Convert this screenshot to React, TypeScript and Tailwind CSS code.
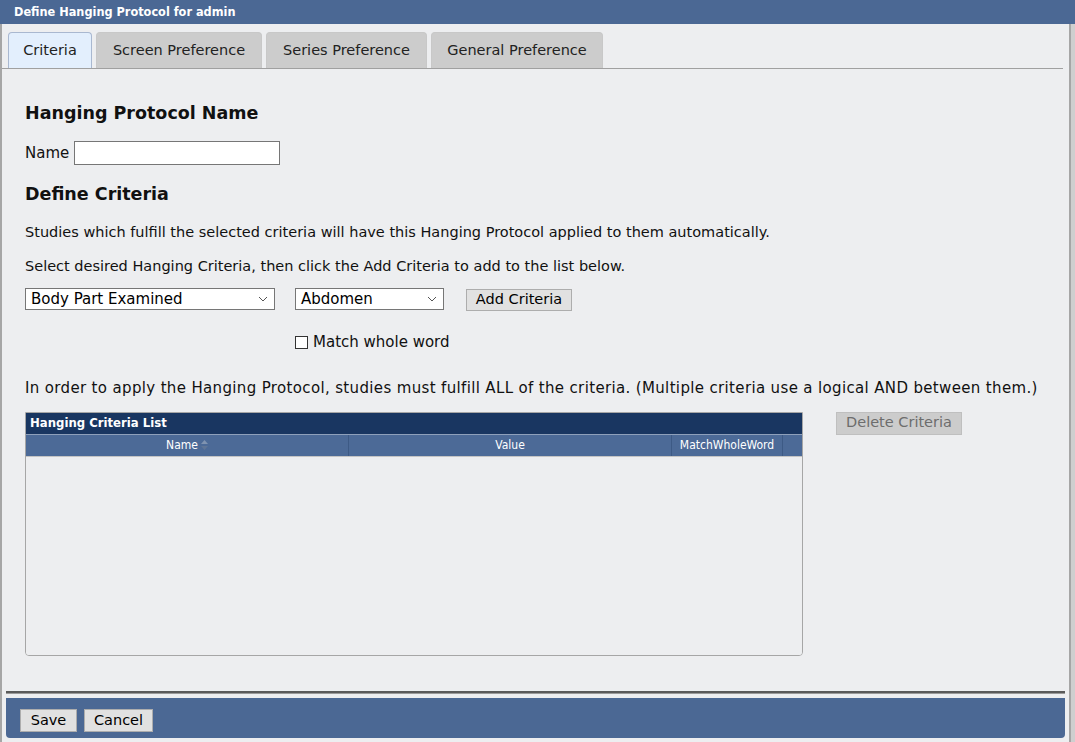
import React from 'react';

const font = { fontFamily: '"DejaVu Sans", Verdana, sans-serif' };
const condensed = { fontFamily: '"DejaVu Sans Condensed", "DejaVu Sans", sans-serif' };

const Tab = ({ label, width, active }: { label: string; width: string; active?: boolean }) => (
  <div
    className={`${width} h-[36px] flex items-center justify-center rounded-t-[4px] border border-b-0 text-[14.5px] text-[#222] ${
      active ? 'bg-[#e3effd] border-[#a9b8d0] -mb-px z-10' : 'bg-[#cccccc] border-[#c8c8c8]'
    }`}
  >
    {label}
  </div>
);

const Select = ({ value, width }: { value: string; width: string }) => (
  <div className={`${width} h-[22px] bg-white border border-[#767676] flex items-center justify-between pl-[5px] pr-[6px] text-[15px] text-black`}>
    <span>{value}</span>
    <svg width="10" height="6" viewBox="0 0 10 6" fill="none" stroke="#555" strokeWidth="1">
      <path d="M1 1l4 4 4-4" />
    </svg>
  </div>
);

const Btn = ({ label, className = '', disabled }: { label: string; className?: string; disabled?: boolean }) => (
  <div
    className={`flex items-center justify-center border text-[14.5px] ${
      disabled ? 'bg-[#cccccc] border-[#bfbfbf] text-[#6d6d6d]' : 'bg-[#e1e1e1] border-[#adadad] text-black'
    } ${className}`}
  >
    {label}
  </div>
);

export default function App() {
  return (
    <div className="w-[1075px] h-[742px] bg-[#cfcfcf] flex flex-col overflow-hidden" style={font}>
      <div className="h-[24px] bg-[#4b6894] text-white font-bold text-[12.6px] pl-[14px] flex items-center shrink-0" style={condensed}>
        Define Hanging Protocol for admin
      </div>
      <div className="w-[1071px] flex-1 flex flex-col bg-[#edeef0] border-l-[2px] border-r-[2px] border-[#a6a6a6]">
        <div className="flex gap-[4px] pl-[6px] pt-[8px] mr-[6px] border-b border-[#a0a0a0]">
          <Tab label="Criteria" width="w-[84px]" active />
          <Tab label="Screen Preference" width="w-[166px]" />
          <Tab label="Series Preference" width="w-[161px]" />
          <Tab label="General Preference" width="w-[172px]" />
        </div>

        <div className="flex-1 pl-[23px] pt-[32px] text-[14.5px] text-[#111]">
          <h2 className="text-[17.5px] font-bold leading-[24px]">Hanging Protocol Name</h2>
          <div className="flex items-center gap-[5px] mt-[16px] text-[15px]">
            <span>Name</span>
            <div className="w-[206px] h-[24px] bg-white border border-[#767676]" />
          </div>
          <h2 className="text-[17.5px] font-bold leading-[24px] mt-[17px]">Define Criteria</h2>
          <p className="mt-[16px] leading-[20px]">Studies which fulfill the selected criteria will have this Hanging Protocol applied to them automatically.</p>
          <p className="mt-[14px] leading-[20px]">Select desired Hanging Criteria, then click the Add Criteria to add to the list below.</p>
          <div className="flex items-start mt-[12px]">
            <Select value="Body Part Examined" width="w-[250px]" />
            <div className="w-[20px]" />
            <Select value="Abdomen" width="w-[149px]" />
            <Btn label="Add Criteria" className="ml-[22px] w-[106px] h-[22px] mt-[1px]" />
          </div>
          <label className="flex items-center gap-[5px] ml-[270px] mt-[20px] text-[15px]">
            <span className="w-[13px] h-[13px] border border-[#333] bg-white" />
            <span>Match whole word</span>
          </label>
          <p className="mt-[24px] leading-[20px] text-[15px] tracking-[0.35px]">
            In order to apply the Hanging Protocol, studies must fulfill ALL of the criteria. (Multiple criteria use a logical AND between them.)
          </p>
          <div className="flex items-start mt-[14px]">
            <div className="w-[778px] h-[244px] border border-[#a6a6a6] rounded-b-[4px] flex flex-col overflow-hidden">
              <div className="h-[21px] bg-[#193661] text-white text-[13px] font-bold pl-[4px] flex items-center" style={condensed}>
                Hanging Criteria List
              </div>
              <div className="h-[23px] bg-[#4c6a97] flex text-[12px] text-white border-t border-[#8ea0bb] border-b border-b-[#c4c4c4]" style={condensed}>
                <div className="w-[323px] flex items-center justify-center gap-[3px] border-r border-[#3d5a85]">
                  Name
                  <svg width="7" height="10" viewBox="0 0 7 10" fill="#7f93b0">
                    <path d="M3.5 0L7 4H0z" />
                    <path d="M0 6h7L3.5 10z" fill="#5f7596" />
                  </svg>
                </div>
                <div className="w-[323px] flex items-center justify-center border-r border-[#3d5a85]">Value</div>
                <div className="w-[111px] flex items-center justify-center border-r border-[#3d5a85]">MatchWholeWord</div>
                <div className="flex-1" />
              </div>
              <div className="flex-1 bg-[#edeef0]" />
            </div>
            <Btn label="Delete Criteria" disabled className="ml-[33px] w-[126px] h-[23px]" />
          </div>
        </div>

        <div className="mx-[4px] h-[3px] bg-[#5a5a5a] border-b border-[#9a9a9a]" />
        <div className="mx-[4px] mt-[4px] mb-[4px] h-[40px] bg-[#4b6894] flex items-start pt-[11px] gap-[7px] pl-[14px] rounded-b-[4px]">
          <Btn label="Save" className="w-[57px] h-[23px]" />
          <Btn label="Cancel" className="w-[69px] h-[23px]" />
        </div>
      </div>
    </div>
  );
}
